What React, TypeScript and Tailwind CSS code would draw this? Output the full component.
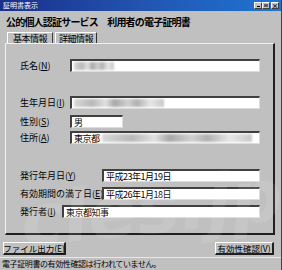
import React from "react";

const font = { fontFamily: '"Noto Sans CJK JP", "Noto Sans", sans-serif' };

function U({ c }: { c: string }) {
  return <span className="underline underline-offset-1">{c}</span>;
}

function Field({ className, children }: { className: string; children?: React.ReactNode }) {
  return (
    <div
      className={`shrink-0 h-[13px] bg-white border-t-2 border-l-2 border-t-[#404040] border-l-[#404040] border-b border-r border-b-[#dcdcdc] border-r-[#dcdcdc] flex items-center pl-[2px] text-[9px] tracking-[-0.5px] leading-none text-black overflow-hidden whitespace-nowrap ${className}`}
    >
      {children}
    </div>
  );
}

function Blur({ w }: { w: number }) {
  return (
    <div className="flex items-center h-[9px]" style={{ width: w }}>
      <div className="h-[8px] w-full bg-[linear-gradient(90deg,#d8d8d8,#b8b8b8_20%,#e0e0e0_35%,#a8a8a8_45%,#d0d0d0_60%,#b0b0b0_70%,#e6e6e6_85%,#c8c8c8)] blur-[1px]" />
    </div>
  );
}

function Label({ className, children }: { className: string; children: React.ReactNode }) {
  return <span className={`shrink-0 whitespace-nowrap text-[9px] leading-none ${className}`}>{children}</span>;
}

export default function App() {
  return (
    <div className="w-[282px] h-[270px] bg-[#c0c0c0] relative overflow-hidden flex flex-col border-r border-r-[#404040] whitespace-nowrap" style={font}>
      {/* title bar */}
      <div className="h-[11px] shrink-0 flex items-center justify-between bg-[linear-gradient(90deg,#1a2f8a,#2254b0_50%,#1f74d4)] pl-[3px] pr-[2px]">
        <span className="text-[7px] leading-none text-white">証明書表示</span>
        <div className="flex items-center">
          <div className="w-[8px] h-[7px] bg-[#c0c0c0] border-t border-l border-white border-b border-r border-b-[#404040] border-r-[#404040] flex items-end justify-center pb-[1px]">
            <div className="w-[3px] h-[1px] bg-black" />
          </div>
          <div className="w-[8px] h-[7px] bg-[#c0c0c0] border-t border-l border-white border-b border-r border-b-[#404040] border-r-[#404040] flex items-center justify-center">
            <div className="w-[4px] h-[3px] border border-[#606060] border-t-2" />
          </div>
          <div className="ml-[1px] w-[8px] h-[7px] bg-[#c0c0c0] border-t border-l border-white border-b border-r border-b-[#404040] border-r-[#404040] flex items-center justify-center text-[6px] leading-none font-bold text-black">
            ×
          </div>
        </div>
      </div>

      {/* heading */}
      <div className="h-[21px] shrink-0 pl-[6px] pt-[5px] text-[10px] tracking-[-0.8px] leading-[12px] text-black font-bold">
        公的個人認証サービス　利用者の電子証明書
      </div>

      {/* tabs */}
      <div className="flex pl-[7px] h-[11px] shrink-0 items-end">
        <div className="h-[11px] w-[46px] border-t border-l border-white border-r border-r-[#404040] flex items-center justify-center text-[9px] tracking-[-0.5px] leading-none text-black">
          基本情報
        </div>
        <div className="ml-[2px] h-[11px] w-[42px] border-t border-l border-white border-r border-r-[#303030] flex items-center justify-center text-[9px] tracking-[-0.5px] leading-none text-black">
          詳細情報
        </div>
      </div>

      {/* panel */}
      <div className="shrink-0 ml-[5px] w-[270px] h-[192px] border-t border-l border-t-[#f0f0f0] border-l-[#f0f0f0] border-r-2 border-b-2 border-r-[#202020] border-b-[#202020] flex flex-col text-black pl-[14px] pr-[14px]">
        <div className="flex items-center mt-[15px]">
          <Label className="w-[50px]">氏名(<U c="N" />)</Label>
          <Field className="w-[190px]"><Blur w={40} /></Field>
        </div>
        <div className="flex items-center mt-[24px]">
          <Label className="w-[50px]">生年月日(<U c="I" />)</Label>
          <Field className="w-[190px]"><Blur w={90} /></Field>
        </div>
        <div className="flex items-center mt-[6px]">
          <Label className="w-[50px]">性別(<U c="S" />)</Label>
          <Field className="w-[53px]">男</Field>
        </div>
        <div className="flex items-center mt-[3px]">
          <Label className="w-[50px]">住所(<U c="A" />)</Label>
          <Field className="w-[190px]">東京都<div className="ml-[2px]"><Blur w={150} /></div></Field>
        </div>
        <div className="flex items-center mt-[25px]">
          <Label className="w-[82px]">発行年月日(<U c="Y" />)</Label>
          <Field className="w-[158px]">平成23年1月19日</Field>
        </div>
        <div className="flex items-center mt-[5px]">
          <Label className="w-[82px] text-[8.5px]">有効期間の満了日(<U c="E" />)</Label>
          <Field className="w-[158px]">平成26年1月18日</Field>
        </div>
        <div className="flex items-center mt-[5px]">
          <Label className="w-[42px] text-[8.5px]">発行者(<U c="I" />)</Label>
          <Field className="w-[198px]">東京都知事</Field>
        </div>
      </div>

      {/* buttons */}
      <div className="shrink-0 flex justify-between pl-[3px] pr-[7px] mt-[7px]">
        <div className="h-[13px] w-[63px] border-t border-l border-white border-b-2 border-r-2 border-b-[#202020] border-r-[#202020] flex items-center justify-center text-[8.5px] leading-none text-black">
          ファイル出力(<U c="E" />)
        </div>
        <div className="h-[13px] w-[59px] border-t border-l border-white border-b-2 border-r-2 border-b-[#202020] border-r-[#202020] flex items-center justify-center text-[8.5px] leading-none text-black">
          有効性確認(<U c="V" />)
        </div>
      </div>

      {/* status bar */}
      <div className="mt-[2px] flex-1 border-t border-t-[#e8e8e8] flex items-center pl-[2px] text-[8px] tracking-[-0.4px] leading-none text-black">
        電子証明書の有効性確認は行われていません。
      </div>

      {/* watermark */}
      <div className="absolute left-[20px] top-[172px] text-[72px] leading-none font-bold italic text-white/10 -rotate-6 pointer-events-none select-none" style={{ fontFamily: '"DejaVu Sans", sans-serif' }}>
        cles.jp
      </div>
    </div>
  );
}
